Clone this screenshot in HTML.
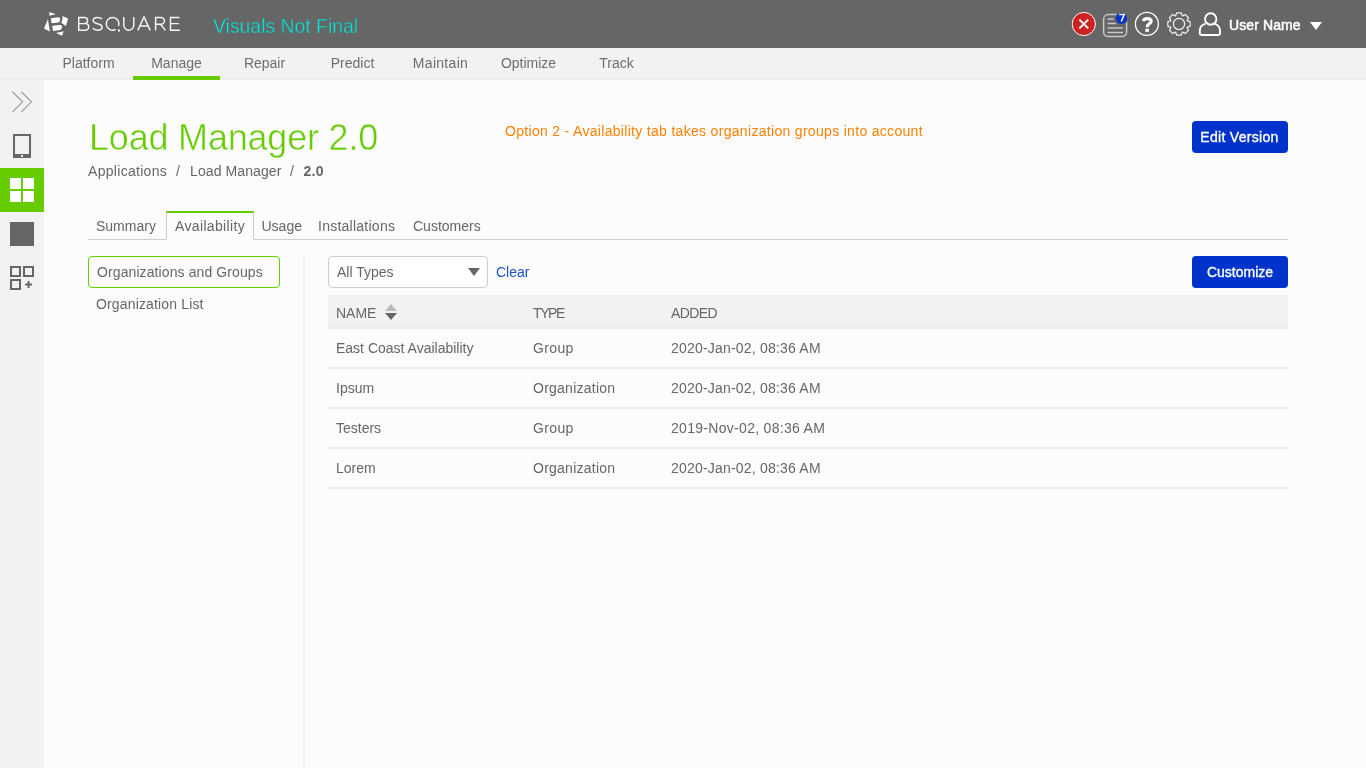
<!DOCTYPE html>
<html><head><meta charset="utf-8">
<style>
*{box-sizing:border-box;margin:0;padding:0}
html,body{width:1366px;height:768px;overflow:hidden;background:#fcfcfc;font-family:"Liberation Sans",sans-serif;color:#666}
.abs{position:absolute;white-space:nowrap}
#hdr{position:absolute;left:0;top:0;width:1366px;height:48px;background:#666}
#nav{position:absolute;left:0;top:48px;width:1366px;height:32px;background:#f2f2f2}
#side{position:absolute;left:0;top:80px;width:44px;height:688px;background:#f2f2f2}
.navi{position:absolute;top:0;height:32px;width:88px;border-left:1px solid #f1f1f1;text-align:center;font-size:14px;line-height:30px;color:#6e6e6e}
.navi.on:after{content:"";position:absolute;left:0;right:0;bottom:0;height:4px;background:#66cc00}
.t14{font-size:14px}
.bc{top:163px;line-height:16px;color:#666;letter-spacing:0.3px}
.btn{position:absolute;background:#0033cc;color:#fff;border-radius:4px;font-size:14px;-webkit-text-stroke:0.35px #fff;text-align:center;line-height:32px;height:32px;width:96px}
.tab{position:absolute;top:211px;height:29px;font-size:14px;line-height:30px;padding:0 8px;color:#666}
.row{position:absolute;left:328px;width:960px;height:40px;border-bottom:2px solid #efefef}
.cell{position:absolute;font-size:14px;line-height:38px;top:0;white-space:nowrap;color:#666}
</style></head><body><div id="wrap" style="position:absolute;left:0;top:0;width:1366px;height:768px;will-change:transform">
<div id="hdr">
  <!-- logo -->
  <svg class="abs" style="left:0;top:0" width="200" height="48" viewBox="0 0 200 48">
    <g fill="#fff">
      <polygon points="49.5,12 55.8,14.3 49.2,15.8"/>
      <polygon points="47.9,19.2 44,28.6 49.9,31.6"/>
      <path d="M51,18.3 L58.3,17.2 Q60.6,17.4 60,20.2 Q59.5,22.4 58.2,22.6 L51.6,23.2 Z"/>
      <path d="M52.3,25.7 L60,24.9 Q62.3,25 62,27.6 Q61.5,29.8 60,30 L53,30.9 Z"/>
      <path d="M62.6,16.1 L68.1,18.4 L65.9,26.1 L61.3,22.8 Q62.7,20.5 62.6,16.1 Z"/>
      <polygon points="56,33.1 63.7,31.3 62,35.8"/>
      <rect x="117.9" y="29.5" width="2" height="2"/>
    </g>
    <g fill="none" stroke="#f6f6f6" stroke-width="1.45">
      <path d="M78.7,30.2 V17.4 H84.5 A3.1,3.1 0 0 1 84.5,23.6 H78.7 M84.5,23.6 H85.4 A3.3,3.3 0 0 1 85.4,30.2 H78"/>
      <path d="M102,19.2 C101,17.8 99.5,17.4 97.6,17.4 C95,17.4 93.2,18.6 93.2,20.5 C93.2,22.5 95,23.2 97.6,23.8 C100.3,24.4 102.1,25.2 102.1,27.3 C102.1,29.2 100.2,30.2 97.6,30.2 C95.5,30.2 93.8,29.5 92.9,28.2"/>
      <path d="M115.6,29.4 A6.35,6.35 0 1 1 118.5,26.1"/>
      <path d="M123.8,17 V25.2 A5,5 0 0 0 133.8,25.2 V17"/>
      <path d="M137.8,30.4 L144,17 L150.2,30.4 M139.8,26 H148.2"/>
      <path d="M155.6,30.4 V17.4 H161 A3.45,3.45 0 0 1 161,24.3 H155.6 M160.5,24.3 L165.5,30.4"/>
      <path d="M179.6,17.4 H170.5 V30.2 H179.9 M170.5,23.6 H178.8"/>
    </g>
  </svg>
  <div class="abs" style="left:213px;top:15px;font-size:19.4px;color:#00e2d6;line-height:22px;-webkit-text-stroke:0.3px #666">Visuals Not Final</div>
  <!-- red x -->
  <svg class="abs" style="left:1071px;top:11px" width="26" height="26" viewBox="0 0 26 26">
    <circle cx="12.8" cy="13" r="11.6" fill="#cc2222" stroke="#fff" stroke-width="1"/>
    <path d="M8.4,8.6 L17.2,17.4 M17.2,8.6 L8.4,17.4" stroke="#fff" stroke-width="1.8"/>
  </svg>
  <!-- news -->
  <svg class="abs" style="left:1102px;top:10px" width="28" height="28" viewBox="0 0 28 28">
    <rect x="1.6" y="4.6" width="23" height="22" rx="4.5" fill="none" stroke="#c8c8c8" stroke-width="1.5"/>
    <path d="M5.5,9 H12 M5.5,13.5 H14 M5.5,18 H21 M5.5,22.5 H21" stroke="#c8c8c8" stroke-width="1.6"/>
    <circle cx="19.5" cy="8.4" r="6.6" fill="#666"/>
    <circle cx="19.5" cy="8.4" r="5.5" fill="#0033cc"/>
    <path d="M17.2,4.6 H22.2 L19.3,11.5" fill="none" stroke="#fff" stroke-width="1.5"/>
  </svg>
  <!-- help -->
  <svg class="abs" style="left:1134px;top:11px" width="26" height="26" viewBox="0 0 26 26">
    <circle cx="12.9" cy="12.9" r="11.5" fill="none" stroke="#fff" stroke-width="1.3"/>
    <path d="M9.5,10.2 C9.6,8.5 11.2,7.6 13.3,7.6 C15.7,7.6 17.2,8.8 17.2,10.6 C17.2,12.6 13.5,13 13.3,15.2 V16.2" fill="none" stroke="#fff" stroke-width="3.1"/>
    <rect x="11.3" y="17.7" width="3.6" height="3.2" fill="#fff"/>
  </svg>
  <!-- gear -->
  <svg class="abs" style="left:1166px;top:11px" width="26" height="26" viewBox="0 0 26 26">
    <g transform="translate(13,13)" fill="none" stroke="#eee" stroke-width="1.2">
      <path d="M-3.19,-8.31 L-2.37,-11.15 L2.37,-11.15 L3.19,-8.31 L3.62,-8.13 L6.21,-9.56 L9.56,-6.21 L8.13,-3.62 L8.31,-3.19 L11.15,-2.37 L11.15,2.37 L8.31,3.19 L8.13,3.62 L9.56,6.21 L6.21,9.56 L3.62,8.13 L3.19,8.31 L2.37,11.15 L-2.37,11.15 L-3.19,8.31 L-3.62,8.13 L-6.21,9.56 L-9.56,6.21 L-8.13,3.62 L-8.31,3.19 L-11.15,2.37 L-11.15,-2.37 L-8.31,-3.19 L-8.13,-3.62 L-9.56,-6.21 L-6.21,-9.56 L-3.62,-8.13Z" stroke-linejoin="round"/>
      <circle r="5.6"/>
    </g>
  </svg>
  <!-- user -->
  <svg class="abs" style="left:1197px;top:11px" width="26" height="26" viewBox="0 0 26 26">
    <path d="M8.6,12.6 C4.6,13.6 2.8,16.6 2.8,20 L2.8,22 C2.8,23.3 3.5,24 4.8,24 L21,24 C22.3,24 23,23.3 23,22 L23,20 C23,16.6 21.2,13.6 17.2,12.6" fill="none" stroke="#fff" stroke-width="1.9"/>
    <circle cx="13.7" cy="8" r="5.7" fill="#666" stroke="#fff" stroke-width="1.9"/>
  </svg>
  <div class="abs" style="left:1229px;top:17px;font-size:14px;color:#fff;line-height:16px;-webkit-text-stroke:0.5px #fff;letter-spacing:0.1px">User Name</div>
  <svg class="abs" style="left:1310px;top:22px" width="12" height="8" viewBox="0 0 12 8"><polygon points="0,0 12,0 6,8" fill="#fff"/></svg>
</div>

<div id="nav">
  <div class="abs" style="left:0;top:30px;width:1366px;height:2px;background:#ececec"></div>
  <div class="navi" style="left:44px">Platform</div>
  <div class="navi on" style="left:132px">Manage</div>
  <div class="navi" style="left:220px">Repair</div>
  <div class="navi" style="left:308px">Predict</div>
  <div class="navi" style="left:396px;letter-spacing:0.3px">Maintain</div>
  <div class="navi" style="left:484px">Optimize</div>
  <div class="navi" style="left:572px">Track</div>
</div>

<div id="side">
  <svg class="abs" style="left:0;top:0" width="44" height="220" viewBox="0 0 44 220">
    <path d="M12.3,11.7 L22.6,21.8 L12.6,31.9 M21.1,11.7 L31.4,21.8 L21.4,31.9" fill="none" stroke="#999" stroke-width="1.15"/>
    <rect x="13" y="54" width="18" height="24" fill="#666"/>
    <rect x="15" y="56" width="14" height="18" fill="#f2f2f2"/>
    <rect x="21" y="75" width="2" height="2" fill="#f2f2f2"/>
  </svg>
  <div class="abs" style="left:0;top:88px;width:44px;height:44px;background:#66cc00"></div>
  <svg class="abs" style="left:0;top:88px" width="44" height="130" viewBox="0 0 44 130">
    <rect x="10" y="10" width="11" height="11" fill="#fff"/>
    <rect x="23" y="10" width="11" height="11" fill="#fff"/>
    <rect x="10" y="23" width="11" height="11" fill="#fff"/>
    <rect x="23" y="23" width="11" height="11" fill="#fff"/>
    <rect x="10" y="54" width="24" height="24" fill="#666"/>
    <rect x="11" y="99" width="9" height="9" fill="none" stroke="#666" stroke-width="2"/>
    <rect x="24" y="99" width="9" height="9" fill="none" stroke="#666" stroke-width="2"/>
    <rect x="11" y="112" width="9" height="9" fill="none" stroke="#666" stroke-width="2"/>
    <path d="M25,116.5 H32 M28.5,113 V120" stroke="#666" stroke-width="2"/>
  </svg>
</div>

<!-- page header -->
<div class="abs" style="left:89px;top:118px;font-size:36px;letter-spacing:-0.2px;color:#66cc00;line-height:40px;-webkit-text-stroke:0.5px #fcfcfc">Load Manager 2.0</div>
<div class="abs t14 bc" style="left:88px">Applications</div>
<div class="abs t14 bc" style="left:176px">/</div>
<div class="abs t14 bc" style="left:190px;letter-spacing:0.1px">Load Manager</div>
<div class="abs t14 bc" style="left:290px">/</div>
<div class="abs t14 bc" style="left:303.5px;font-weight:bold">2.0</div>
<div class="abs t14" style="left:505px;top:123px;line-height:16px;color:#ff8000;letter-spacing:0.31px">Option 2 - Availability tab takes organization groups into account</div>
<div class="btn" style="left:1192px;top:121px;letter-spacing:0.3px;text-indent:-1px">Edit Version</div>

<!-- tabs -->
<div class="abs" style="left:88px;top:239px;width:1200px;height:1px;background:#cccccc"></div>
<div class="tab" style="left:88px">Summary</div>
<div class="tab" style="left:166px;width:88px;border:1px solid #cccccc;border-top:2px solid #66cc00;border-bottom:1px solid #fcfcfc;height:29px;line-height:26px;padding:0 0 0 8px;letter-spacing:0.35px">Availability</div>
<div class="tab" style="left:254px;padding-left:7.5px">Usage</div>
<div class="tab" style="left:309px;padding-left:9px;letter-spacing:0.25px">Installations</div>
<div class="tab" style="left:404px;padding-left:9px">Customers</div>

<!-- left subnav -->
<div class="abs" style="left:303px;top:256px;width:2px;height:512px;background:#f2f2f2"></div>
<div class="abs t14" style="left:88px;top:256px;width:192px;height:32px;border:1px solid #66cc00;border-radius:4px;padding-left:8px;line-height:30px;letter-spacing:0.1px">Organizations and Groups</div>
<div class="abs t14" style="left:96px;top:296px;line-height:16px;letter-spacing:0.15px">Organization List</div>

<!-- filter -->
<div class="abs t14" style="left:328px;top:256px;width:160px;height:32px;border:1px solid #cccccc;border-radius:4px;padding-left:8px;line-height:30px;background:#fff">All Types</div>
<svg class="abs" style="left:468px;top:268px" width="12" height="8" viewBox="0 0 12 8"><polygon points="0,0 12,0 6,8" fill="#666"/></svg>
<div class="abs t14" style="left:496px;top:264px;line-height:16px;color:#1a4fc4">Clear</div>
<div class="btn" style="left:1192px;top:256px">Customize</div>

<!-- table -->
<div class="abs" style="left:328px;top:295px;width:960px;height:34px;background:#f2f2f2;border-bottom:2px solid #ececec"></div>
<div class="cell" style="left:336px;top:297px;line-height:33px">NAME</div>
<svg class="abs" style="left:385px;top:304px" width="12" height="16" viewBox="0 0 12 16"><polygon points="6,0 12,7 0,7" fill="#bbb"/><polygon points="0,9 12,9 6,16" fill="#666"/></svg>
<div class="cell" style="left:533px;top:297px;line-height:33px;letter-spacing:-1.4px">TYPE</div>
<div class="cell" style="left:671px;top:297px;line-height:33px;letter-spacing:-0.6px">ADDED</div>

<div class="row" style="top:329px"><div class="cell" style="left:8px">East Coast Availability</div><div class="cell" style="left:205px;letter-spacing:0.35px">Group</div><div class="cell" style="left:343px;letter-spacing:0.2px">2020-Jan-02, 08:36 AM</div></div>
<div class="row" style="top:369px"><div class="cell" style="left:8px">Ipsum</div><div class="cell" style="left:205px;letter-spacing:0.25px">Organization</div><div class="cell" style="left:343px;letter-spacing:0.2px">2020-Jan-02, 08:36 AM</div></div>
<div class="row" style="top:409px"><div class="cell" style="left:8px">Testers</div><div class="cell" style="left:205px;letter-spacing:0.35px">Group</div><div class="cell" style="left:343px;letter-spacing:0.3px">2019-Nov-02, 08:36 AM</div></div>
<div class="row" style="top:449px"><div class="cell" style="left:8px">Lorem</div><div class="cell" style="left:205px;letter-spacing:0.25px">Organization</div><div class="cell" style="left:343px;letter-spacing:0.2px">2020-Jan-02, 08:36 AM</div></div>

</div>
</body></html>
